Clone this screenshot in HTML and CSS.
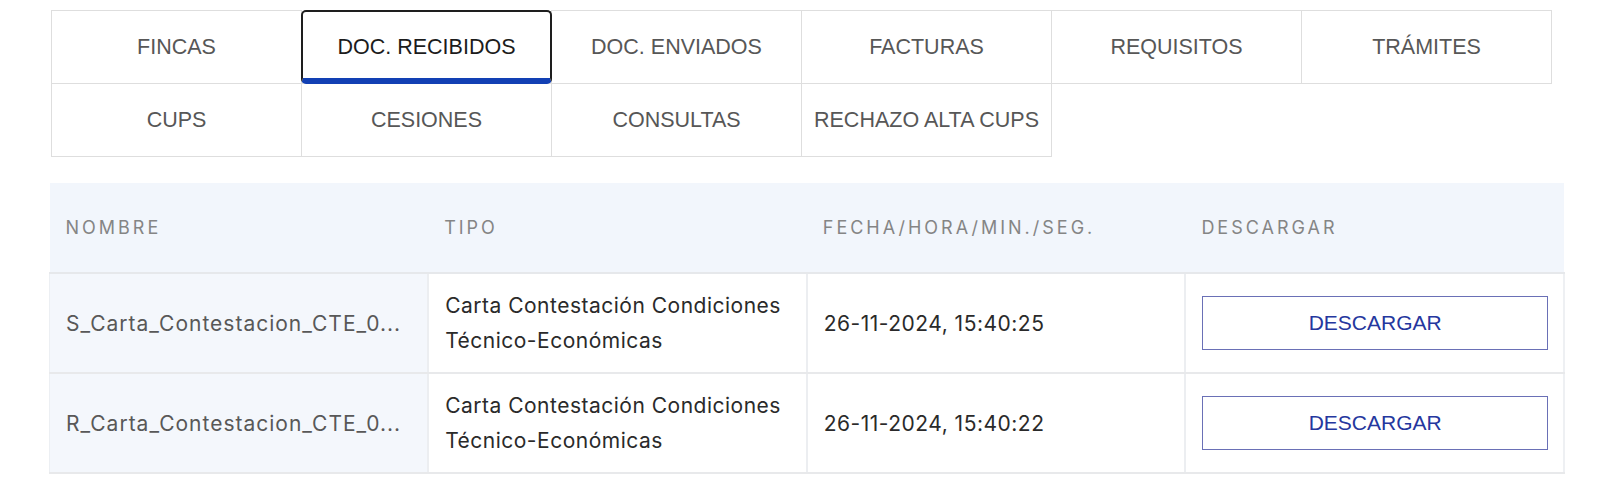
FILE: index.html
```html
<!DOCTYPE html>
<html lang="es">
<head>
<meta charset="utf-8">
<title>Documentos recibidos</title>
<link rel="stylesheet" href="styles.css">
</head>
<body>
<div class="page">
  <nav class="tabs">
    <div class="tab">FINCAS</div>
    <div class="tab active">DOC. RECIBIDOS</div>
    <div class="tab">DOC. ENVIADOS</div>
    <div class="tab">FACTURAS</div>
    <div class="tab">REQUISITOS</div>
    <div class="tab">TRÁMITES</div>
    <div class="tab">CUPS</div>
    <div class="tab">CESIONES</div>
    <div class="tab">CONSULTAS</div>
    <div class="tab">RECHAZO ALTA CUPS</div>
  </nav>

  <table class="docs">
    <colgroup>
      <col class="c"><col class="c"><col class="c"><col class="c">
    </colgroup>
    <thead>
      <tr>
        <th>NOMBRE</th>
        <th>TIPO</th>
        <th>FECHA/HORA/MIN./SEG.</th>
        <th>DESCARGAR</th>
      </tr>
    </thead>
    <tbody>
      <tr>
        <td class="name">S_Carta_Contestacion_CTE_0...</td>
        <td class="type">Carta Contestación Condiciones Técnico-Económicas</td>
        <td class="date">26-11-2024, 15:40:25</td>
        <td class="dl"><button class="btn" type="button">DESCARGAR</button></td>
      </tr>
      <tr>
        <td class="name">R_Carta_Contestacion_CTE_0...</td>
        <td class="type">Carta Contestación Condiciones Técnico-Económicas</td>
        <td class="date">26-11-2024, 15:40:22</td>
        <td class="dl"><button class="btn" type="button">DESCARGAR</button></td>
      </tr>
    </tbody>
  </table>
</div>
</body>
</html>
```

FILE: styles.css
```css
* { box-sizing: border-box; }

html, body {
  margin: 0;
  padding: 0;
  background: #ffffff;
}

.page {
  padding-top: 10px;
  padding-left: 49px;
}

.tabs {
  display: grid;
  grid-template-columns: repeat(6, 250px);
  grid-auto-rows: 73px;
  width: 1500px;
  margin-left: 2px;
}

.tab {
  display: flex;
  align-items: center;
  justify-content: center;
  border: 1px solid #dedede;
  margin: 0 -1px -1px 0;
  font-family: "Liberation Sans", Arial, sans-serif;
  font-size: 21.5px;
  color: #575757;
  background: #fff;
}

.tab.active {
  position: relative;
  z-index: 1;
  border: 2px solid #1e1e1e;
  border-bottom: 6px solid #1240b4;
  border-radius: 5px;
  color: #1c1c1c;
  padding-top: 4px;
}

.docs {
  margin-top: 27px;
  width: 1516px;
  border-collapse: collapse;
  table-layout: fixed;
  font-family: Inter, "Noto Sans", sans-serif;
}

.docs col.c { width: 25%; }

.docs thead tr {
  background: #f2f6fc;
}

.docs th {
  height: 90px;
  padding: 0 16px;
  text-align: left;
  font-weight: 400;
  font-size: 18px;
  letter-spacing: 3px;
  color: #858585;
  border-bottom: 2px solid #e6e8eb;
}

.docs td {
  height: 100px;
  padding: 14px 16px;
  font-size: 21px;
  letter-spacing: 0.5px;
  line-height: 35px;
  color: #2a2a2a;
  border-bottom: 2px solid #e8e9eb;
  border-left: 2px solid #eceef1;
  vertical-align: middle;
}

.docs td:last-child {
  border-right: 2px solid #eef0f3;
  padding-right: 15px;
}

.docs td.name {
  background: #f4f7fc;
  color: #585858;
  border-left: 1px solid #eceff3;
  white-space: nowrap;
  letter-spacing: 1px;
}

.btn {
  display: block;
  width: 100%;
  height: 54px;
  background: #fff;
  border: 1px solid #6a70b6;
  color: #25379e;
  font-family: "Liberation Sans", Arial, sans-serif;
  font-size: 21px;
  padding: 0;
  cursor: pointer;
}
```
